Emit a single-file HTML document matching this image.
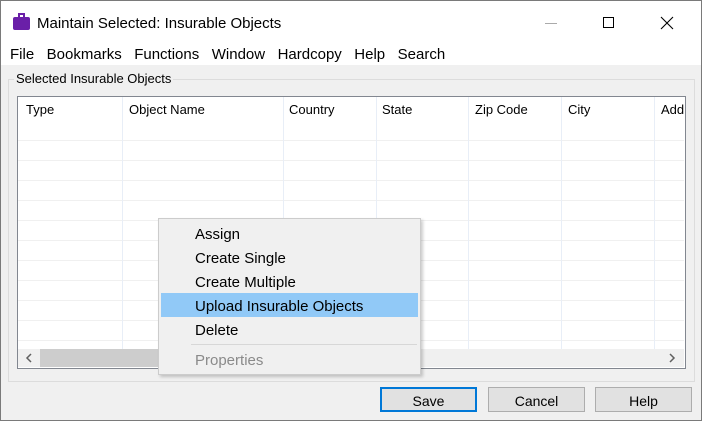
<html><head><style>
body{margin:0;width:702px;height:421px;overflow:hidden;font-family:"Liberation Sans",sans-serif;background:#f0f0f0;position:relative}
.a{position:absolute}
</style></head><body>
<div class="a" style="left:0;top:0;width:700px;height:419px;border:1px solid #7a7a7a;background:#f0f0f0"></div>
<div class="a" style="left:1px;top:1px;width:700px;height:64px;background:#fff"></div>
<div class="a" style="left:13px;top:17px;width:17px;height:13px;background:#6a1fa8;border-radius:2px"></div>
<div class="a" style="left:18px;top:13px;width:7px;height:5px;border:2px solid #6a1fa8;border-bottom:none;box-sizing:border-box"></div>
<div class="a" style="left:37px;top:15px;font-size:15px;color:#000">Maintain Selected: Insurable Objects</div>
<div class="a" style="left:545px;top:23px;width:12px;height:1px;background:#aaa"></div>
<div class="a" style="left:603px;top:17px;width:11px;height:11px;border:1px solid #000;box-sizing:border-box"></div>
<svg class="a" style="left:660px;top:16px" width="14" height="14"><path d="M1 1L13 13M13 1L1 13" stroke="#000" stroke-width="1.1"/></svg>
<div class="a" style="left:10px;top:46px;font-size:15px">File&nbsp;&nbsp; Bookmarks&nbsp;&nbsp; Functions&nbsp;&nbsp; Window&nbsp;&nbsp; Hardcopy&nbsp;&nbsp; Help&nbsp;&nbsp; Search</div>
<div class="a" style="left:8px;top:79px;width:685px;height:301px;border:1px solid #dcdcdc"></div>
<div class="a" style="left:14px;top:71px;font-size:13px;background:#f0f0f0;padding:0 2px">Selected Insurable Objects</div>
<div class="a" style="left:17px;top:96px;width:667px;height:271px;border:1px solid #828790;background:#fff;overflow:hidden"></div>
<svg class="a" style="left:18px;top:97px" width="666" height="252">
<g stroke="#f0f0f0"><path d="M0 43.5H666M0 63.5H666M0 83.5H666M0 103.5H666M0 123.5H666M0 143.5H666M0 163.5H666M0 183.5H666M0 203.5H666M0 223.5H666M0 243.5H666"/></g>
<g stroke="#e8eef7"><path d="M104.5 0V252M265.5 0V252M358.5 0V252M450.5 0V252M543.5 0V252M636.5 0V252"/></g>
</svg>
<div class="a" style="top:102px;font-size:13px;left:26px">Type</div>
<div class="a" style="top:102px;font-size:13px;left:129px">Object Name</div>
<div class="a" style="top:102px;font-size:13px;left:289px">Country</div>
<div class="a" style="top:102px;font-size:13px;left:382px">State</div>
<div class="a" style="top:102px;font-size:13px;left:475px">Zip Code</div>
<div class="a" style="top:102px;font-size:13px;left:568px">City</div>
<div class="a" style="top:102px;font-size:13px;left:661px;width:23px;overflow:hidden">Address</div>
<div class="a" style="left:18px;top:349px;width:666px;height:18px;background:#f0f0f0"></div>
<div class="a" style="left:40px;top:349px;width:130px;height:18px;background:#cdcdcd"></div>
<svg class="a" style="left:24px;top:353px" width="10" height="10"><path d="M7 1L3 5L7 9" stroke="#606060" stroke-width="1.5" fill="none"/></svg>
<svg class="a" style="left:667px;top:353px" width="10" height="10"><path d="M3 1L7 5L3 9" stroke="#606060" stroke-width="1.5" fill="none"/></svg>
<div class="a" style="left:158px;top:218px;width:261px;height:155px;background:#f0f0f0;border:1px solid #ccc;box-shadow:2px 2px 3px rgba(0,0,0,.2)"></div>
<div class="a" style="left:161px;top:293px;width:257px;height:24px;background:#91c9f7"></div>
<div class="a" style="left:191px;top:344px;width:226px;height:1px;background:#d7d7d7"></div>
<div class="a" style="left:195px;top:223px;font-size:15px;line-height:24px;color:#000">Assign<br>Create Single<br>Create Multiple<br>Upload Insurable Objects<br>Delete</div>
<div class="a" style="left:195px;top:352px;font-size:15px;color:#8a8a8a">Properties</div>
<div class="a" style="left:380px;top:387px;width:97px;height:25px;box-sizing:border-box;border:2px solid #0078d7;background:#e1e1e1;text-align:center;font-size:14px;line-height:25px">Save</div>
<div class="a" style="left:488px;top:387px;width:97px;height:25px;box-sizing:border-box;border:1px solid #adadad;background:#e1e1e1;text-align:center;font-size:14px;line-height:27px">Cancel</div>
<div class="a" style="left:595px;top:387px;width:97px;height:25px;box-sizing:border-box;border:1px solid #adadad;background:#e1e1e1;text-align:center;font-size:14px;line-height:27px">Help</div>
</body></html>
